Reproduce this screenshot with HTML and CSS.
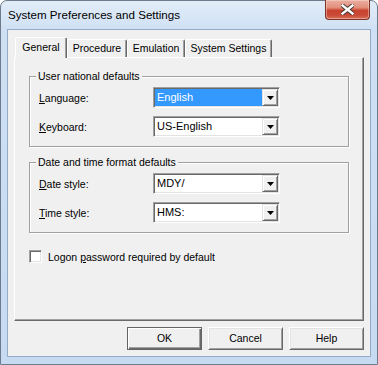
FILE: index.html
```html
<!DOCTYPE html>
<html>
<head>
<meta charset="utf-8">
<link rel="stylesheet" href="styles.css">
</head>
<body>
<div class="window">
  <div class="titlebar">
    <span class="title">System Preferences and Settings</span>
    <div class="close">
      <svg width="13" height="11" viewBox="0 0 13 11"><path d="M1.5 1.5 L11.5 9.5 M11.5 1.5 L1.5 9.5" stroke="#4a3a36" stroke-width="4.4" stroke-linecap="square" fill="none"/><path d="M1.5 1.5 L11.5 9.5 M11.5 1.5 L1.5 9.5" stroke="#ffffff" stroke-width="2.4" stroke-linecap="square" fill="none"/></svg>
    </div>
  </div>
  <div class="client">
    <div class="tabs">
      <div class="tab selected t1">General</div>
      <div class="tab t2">Procedure</div>
      <div class="tab t3">Emulation</div>
      <div class="tab t4">System Settings</div>
    </div>
    <div class="panel">
      <fieldset class="group">
        <legend>User national defaults</legend>
        <div class="row">
          <span class="label"><u>L</u>anguage:</span>
          <div class="combo"><span class="value sel">English</span><span class="arrow"><svg width="7" height="4" viewBox="0 0 7 4"><polygon points="0,0 7,0 3.5,4" fill="#000"/></svg></span></div>
        </div>
        <div class="row">
          <span class="label"><u>K</u>eyboard:</span>
          <div class="combo"><span class="value">US-English</span><span class="arrow"><svg width="7" height="4" viewBox="0 0 7 4"><polygon points="0,0 7,0 3.5,4" fill="#000"/></svg></span></div>
        </div>
      </fieldset>
      <fieldset class="group second">
        <legend>Date and time format defaults</legend>
        <div class="row">
          <span class="label"><u>D</u>ate style:</span>
          <div class="combo"><span class="value">MDY/</span><span class="arrow"><svg width="7" height="4" viewBox="0 0 7 4"><polygon points="0,0 7,0 3.5,4" fill="#000"/></svg></span></div>
        </div>
        <div class="row">
          <span class="label"><u>T</u>ime style:</span>
          <div class="combo"><span class="value">HMS:</span><span class="arrow"><svg width="7" height="4" viewBox="0 0 7 4"><polygon points="0,0 7,0 3.5,4" fill="#000"/></svg></span></div>
        </div>
      </fieldset>
      <div class="check-row">
        <span class="checkbox"></span>
        <span>Logon <u>p</u>assword required by default</span>
      </div>
    </div>
    <div class="buttons">
      <div class="btn default">OK</div>
      <div class="btn">Cancel</div>
      <div class="btn">Help</div>
    </div>
  </div>
</div>
</body>
</html>
```
FILE: styles.css
```css
html, body {
  margin: 0;
  padding: 0;
  background: #ffffff;
}
body {
  font-family: "Liberation Sans", Arial, sans-serif;
  font-size: 10.5px;
  color: #000;
}
.window {
  width: 378px;
  height: 365px;
  box-sizing: border-box;
  border: 1px solid #6d7b8d;
  border-radius: 7px 7px 0 0;
  background: linear-gradient(#e2ecf8, #cfe0f4 30px, #c6daf1);
  display: flex;
  flex-direction: column;
  padding: 0 6px 7px 6px;
}
.titlebar {
  height: 28px;
  margin: 0 -6px;
  padding: 0 7px;
  display: flex;
  align-items: flex-start;
}
.title {
  font-size: 11.6px;
  line-height: 16px;
  margin-top: 6px;
  color: #000;
}
.close {
  margin-left: auto;
  margin-top: -1px;
  width: 45px;
  height: 20px;
  box-sizing: border-box;
  border: 1px solid #7b3428;
  border-top: none;
  border-radius: 0 0 4px 4px;
  background: linear-gradient(#eab0a2 0%, #e18d7a 40%, #c9442f 55%, #c84a36 80%, #d9715a 100%);
  box-shadow: inset 0 0 0 1px rgba(255, 220, 210, 0.45);
  display: flex;
  align-items: center;
  justify-content: center;
}
.close svg {
  display: block;
}
.client {
  flex: 1;
  border: 1px solid #93abc8;
  background: #f0f0f0;
  display: flex;
  flex-direction: column;
  padding: 7px 6px 6px 6px;
}
.tabs {
  height: 20px;
  display: flex;
  align-items: flex-start;
  padding-left: 1px;
}
.tab {
  box-sizing: border-box;
  height: 18px;
  margin-top: 2px;
  border-top: 1px solid #fff;
  border-left: 1px solid #fff;
  border-right: 1px solid #696969;
  box-shadow: inset -1px 0 0 #a0a0a0;
  border-radius: 2px 2px 0 0;
  text-align: center;
  line-height: 16px;
  background: #f0f0f0;
}
.tab.selected {
  height: 21px;
  margin-top: 0;
  margin-bottom: -1px;
  line-height: 18px;
  position: relative;
  z-index: 1;
}
.t1 { width: 52px; }
.t2 { width: 60px; }
.t3 { width: 58px; }
.t4 { width: 87px; }
.panel {
  flex: 1;
  border-top: 1px solid #fff;
  border-left: 1px solid #fff;
  border-right: 1px solid #696969;
  border-bottom: 1px solid #696969;
  box-shadow: inset -1px -1px 0 #a0a0a0;
  padding: 12px 0 0 14px;
}
.group {
  width: 320px;
  box-sizing: border-box;
  margin: 0;
  padding: 4px 0 9px 0;
  border: 1px solid #a0a0a0;
  box-shadow: 1px 1px 0 #fff, inset 1px 1px 0 #fff;
  min-width: 0;
}
.group.second {
  margin-top: 9px;
}
.group legend {
  margin-left: 6px;
  padding: 0 2px;
  line-height: 13px;
  background: #f0f0f0;
}
.row {
  display: flex;
  align-items: center;
  padding-left: 9px;
  height: 21px;
}
.row + .row {
  margin-top: 8px;
}
.label {
  width: 114px;
}
.combo {
  width: 127px;
  height: 21px;
  box-sizing: border-box;
  border: 1px solid;
  border-color: #a0a0a0 #fff #fff #a0a0a0;
  box-shadow: inset 1px 1px 0 #696969, inset -1px -1px 0 #e3e3e3;
  background: #fff;
  padding: 1px;
  display: flex;
}
.value {
  flex: 1;
  padding-left: 2px;
  line-height: 17px;
  font-size: 11px;
  color: #000;
}
.value.sel {
  background: #3399ff;
  color: #fff;
}
.arrow {
  width: 16px;
  height: 17px;
  box-sizing: border-box;
  background: #f0f0f0;
  border: 1px solid;
  border-color: #e3e3e3 #696969 #696969 #e3e3e3;
  box-shadow: inset 1px 1px 0 #fff, inset -1px -1px 0 #a0a0a0;
  display: flex;
  align-items: center;
  justify-content: center;
}
.arrow svg {
  display: block;
  margin-left: 1px;
}
.check-row {
  display: flex;
  align-items: center;
  gap: 6px;
  margin-top: 17px;
  height: 13px;
}
.checkbox {
  width: 13px;
  height: 13px;
  box-sizing: border-box;
  border: 1px solid;
  border-color: #a0a0a0 #fff #fff #a0a0a0;
  box-shadow: inset 1px 1px 0 #696969, inset -1px -1px 0 #e3e3e3;
  background: #fff;
}
.buttons {
  margin-top: 6px;
  display: flex;
  justify-content: flex-end;
  gap: 6px;
}
.btn {
  width: 75px;
  height: 23px;
  box-sizing: border-box;
  border: 1px solid;
  border-color: #fff #696969 #696969 #fff;
  box-shadow: inset 1px 1px 0 #e3e3e3, inset -1px -1px 0 #a0a0a0;
  background: #f0f0f0;
  text-align: center;
  line-height: 21px;
}
.btn.default {
  border-color: #646464;
  box-shadow: inset 1px 1px 0 #fff, inset -1px -1px 0 #696969, inset -2px -2px 0 #a0a0a0;
}
```
